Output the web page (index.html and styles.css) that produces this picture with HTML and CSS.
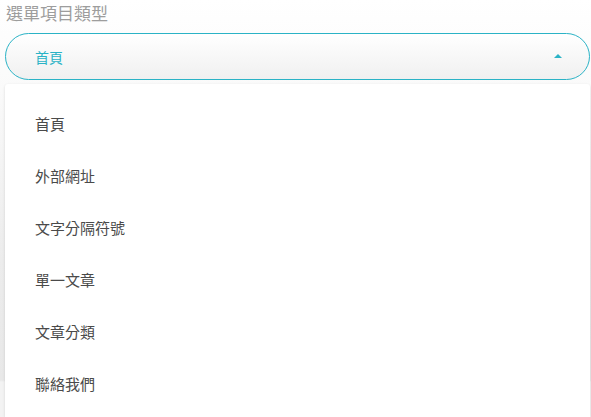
FILE: index.html
```
<!DOCTYPE html>
<html>
<head>
    <meta charset="UTF-8">
    <title>選單項目類型</title>
    <link rel="stylesheet" href="styles.css">
</head>
<body>
    <div class="fieldBox">
        <label class="fieldLabel">選單項目類型</label>
        <div class="selectBox">
            <span class="selectValue">首頁</span>
            <span class="selectCaret"></span>
        </div>
        <ul class="selectMenu">
            <li class="menuItem">首頁</li>
            <li class="menuItem">外部網址</li>
            <li class="menuItem">文字分隔符號</li>
            <li class="menuItem">單一文章</li>
            <li class="menuItem">文章分類</li>
            <li class="menuItem">聯絡我們</li>
        </ul>
    </div>
</body>
</html>
```

FILE: styles.css
```
html, body {
    margin: 0;
    height: 100%;
    overflow: hidden;
}

body {
    font-family: Roboto, "Noto Sans CJK TC", sans-serif;
    background: linear-gradient(#ffffff 0px, #fafafa 90px, #ececec 260px, #e8e8e8 380px, #f3f3f3 382px, #f3f3f3 100%);
}

.fieldBox {
    height: 100%;
    box-sizing: border-box;
    display: flex;
    flex-direction: column;
    padding: 2px 1px 0 5px;
}

.fieldLabel {
    font-size: 17px;
    color: #9d9d9d;
    line-height: 24px;
    padding-left: 1px;
}

.selectBox {
    margin-top: 7px;
    height: 45px;
    flex-shrink: 0;
    border: 1px solid #2bb3c6;
    border-radius: 24px;
    background: linear-gradient(#ffffff, #f0f0f0);
    display: flex;
    align-items: center;
    justify-content: space-between;
    padding: 0 27px 0 29px;
}

.selectValue {
    font-size: 14px;
    color: #2bb3c6;
}

.selectCaret {
    width: 0;
    height: 0;
    border-left: 4px solid transparent;
    border-right: 4px solid transparent;
    border-bottom: 4px solid #2bb3c6;
    margin-top: -2px;
}

.selectMenu {
    flex: 1;
    list-style: none;
    margin: 4px 0 0 0;
    padding: 15px 0 0 0;
    background: #fff;
    border-radius: 3px 3px 0 0;
    box-shadow: 0 1px 3px rgba(0, 0, 0, 0.12);
}

.menuItem {
    height: 52px;
    line-height: 52px;
    padding-left: 30px;
    font-size: 15px;
    color: #4a4a4a;
}
```
